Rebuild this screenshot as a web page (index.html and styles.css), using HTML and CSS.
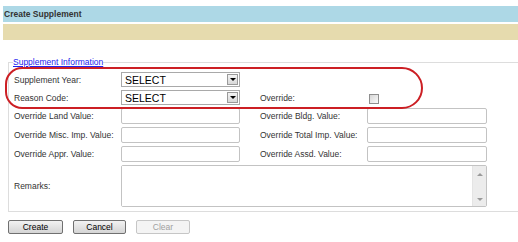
FILE: index.html
```html
<!DOCTYPE html>
<html lang="en">
<head>
    <meta charset="UTF-8">
    <meta name="viewport" content="width=device-width, initial-scale=1.0">
    <title>Create Supplement</title>
    <link rel="stylesheet" href="styles.css">
</head>
<body>

<div class="titleBar">Create Supplement</div>
<div class="toolBar"></div>

<fieldset class="panel">
    <legend>Supplement Information</legend>
    <div class="formGrid">
        <label class="lbl">Supplement Year:</label>
        <div class="select"><span>SELECT</span><span class="arrow"></span></div>
        <span></span><span></span><span></span>

        <label class="lbl">Reason Code:</label>
        <div class="select"><span>SELECT</span><span class="arrow"></span></div>
        <span></span>
        <label class="lbl">Override:</label>
        <div><input type="checkbox" class="check"></div>

        <label class="lbl">Override Land Value:</label>
        <input type="text" class="txt">
        <span></span>
        <label class="lbl">Override Bldg. Value:</label>
        <input type="text" class="txt">

        <label class="lbl">Override Misc. Imp. Value:</label>
        <input type="text" class="txt">
        <span></span>
        <label class="lbl">Override Total Imp. Value:</label>
        <input type="text" class="txt">

        <label class="lbl">Override Appr. Value:</label>
        <input type="text" class="txt">
        <span></span>
        <label class="lbl">Override Assd. Value:</label>
        <input type="text" class="txt">

        <label class="lbl">Remarks:</label>
        <div class="remarks">
            <textarea></textarea>
            <div class="scroll"><span class="up"></span><span class="down"></span></div> <!-- drawn scrollbar -->
        </div>
    </div>
</fieldset>

<div class="buttons">
    <button class="btn btnCreate">Create</button>
    <button class="btn btnCancel">Cancel</button>
    <button class="btn btnClear" disabled>Clear</button>
</div>

<div class="highlight"></div> <!-- red annotation ring -->

</body>
</html>
```

FILE: styles.css
```css
body {
    font-family: Arial, "Liberation Sans", sans-serif;
    font-size: 8.5px;
    color: #333;
    margin: 0;
    padding: 6px 0 0 3px;
    background: #fff;
    width: 515px;
    position: relative;
}
.titleBar {
    height: 16px;
    line-height: 16px;
    background-color: #add8e6; /* light blue header */
    font-weight: bold;
    padding-left: 1px;
    color: #333;
}
.toolBar {
    height: 16px;
    margin-top: 2px;
    background-color: #e6dbae; /* tan strip */
}
.panel {
    margin: 17px 0 0 5px;
    padding: 4px 5px 4px 5px;
    border: 1px solid #ddd;
    border-right: none;
}
.panel legend {
    padding: 0;
    margin-left: -1px;
    color: #2222ee;
    text-decoration: underline;
    line-height: 11px;
}
.formGrid {
    display: grid;
    grid-template-columns: 107px 119px 20px 107px 120px;
    row-gap: 3px;
    align-items: center;
}
.lbl {
    white-space: nowrap;
}
.select {
    height: 15px;
    box-sizing: border-box;
    border: 1px solid #a9a9a9;
    display: flex;
    align-items: center;
    justify-content: space-between;
    font-size: 10.5px;
    color: #000;
    padding-left: 3px;
    padding-right: 1px;
}
.select .arrow {
    width: 11px;
    height: 11px;
    box-sizing: border-box;
    border: 1px solid #9a9a9a;
    background: linear-gradient(#f4f4f4, #d8d8d8);
    position: relative;
}
.select .arrow::after {
    content: "";
    position: absolute;
    left: 2px;
    top: 3px;
    border-left: 3px solid transparent;
    border-right: 3px solid transparent;
    border-top: 3px solid #000;
}
.txt {
    height: 16px;
    box-sizing: border-box;
    border: 1px solid #c3c3c3;
    border-radius: 2px;
    margin: 0;
    padding: 0 2px;
    width: 100%;
}
.check {
    appearance: none;
    -webkit-appearance: none;
    width: 10px;
    height: 10px;
    margin: 2px 0 0 2px;
    border: 1px solid #8e8e8e;
    background: linear-gradient(135deg, #d6d6d6, #fafafa);
    display: block;
}
.remarks {
    grid-column: 2 / 6;
    height: 42px;
    box-sizing: border-box;
    border: 1px solid #c3c3c3;
    border-radius: 2px;
    display: flex;
}
.remarks textarea {
    flex: 1;
    border: none;
    margin: 0;
    padding: 0;
    resize: none;
    outline: none;
}
.scroll {
    width: 13px;
    background: #ececec;
    border-left: 1px solid #e4e4e4;
    display: flex;
    flex-direction: column;
    justify-content: space-between;
    align-items: center;
    padding: 7px 0 5px 0;
}
.scroll .up {
    border-left: 3px solid transparent;
    border-right: 3px solid transparent;
    border-bottom: 3px solid #9a9a9a;
}
.scroll .down {
    border-left: 3px solid transparent;
    border-right: 3px solid transparent;
    border-top: 3px solid #9a9a9a;
}
.buttons {
    display: flex;
    gap: 10px;
    margin: 8px 0 0 5px;
}
.btn {
    height: 14px;
    box-sizing: border-box;
    padding: 0;
    font-family: inherit;
    font-size: 8.5px;
    line-height: 12px;
    color: #000;
    border: 1px solid #707070;
    border-radius: 2px;
    background: linear-gradient(#f2f2f2, #d4d4d4);
}
.btnCreate { width: 55px; }
.btnCancel { width: 53px; }
.btnClear {
    width: 54px;
    color: #a0a0a0;
    border-color: #c6c6c6;
    background: #f4f4f4;
}
.highlight {
    position: absolute;
    left: 5px;
    top: 67px;
    width: 418px;
    height: 42px;
    box-sizing: border-box;
    border: 2px solid #cc1f24;
    border-radius: 18px 22px 22px 18px;
    pointer-events: none;
}
```
